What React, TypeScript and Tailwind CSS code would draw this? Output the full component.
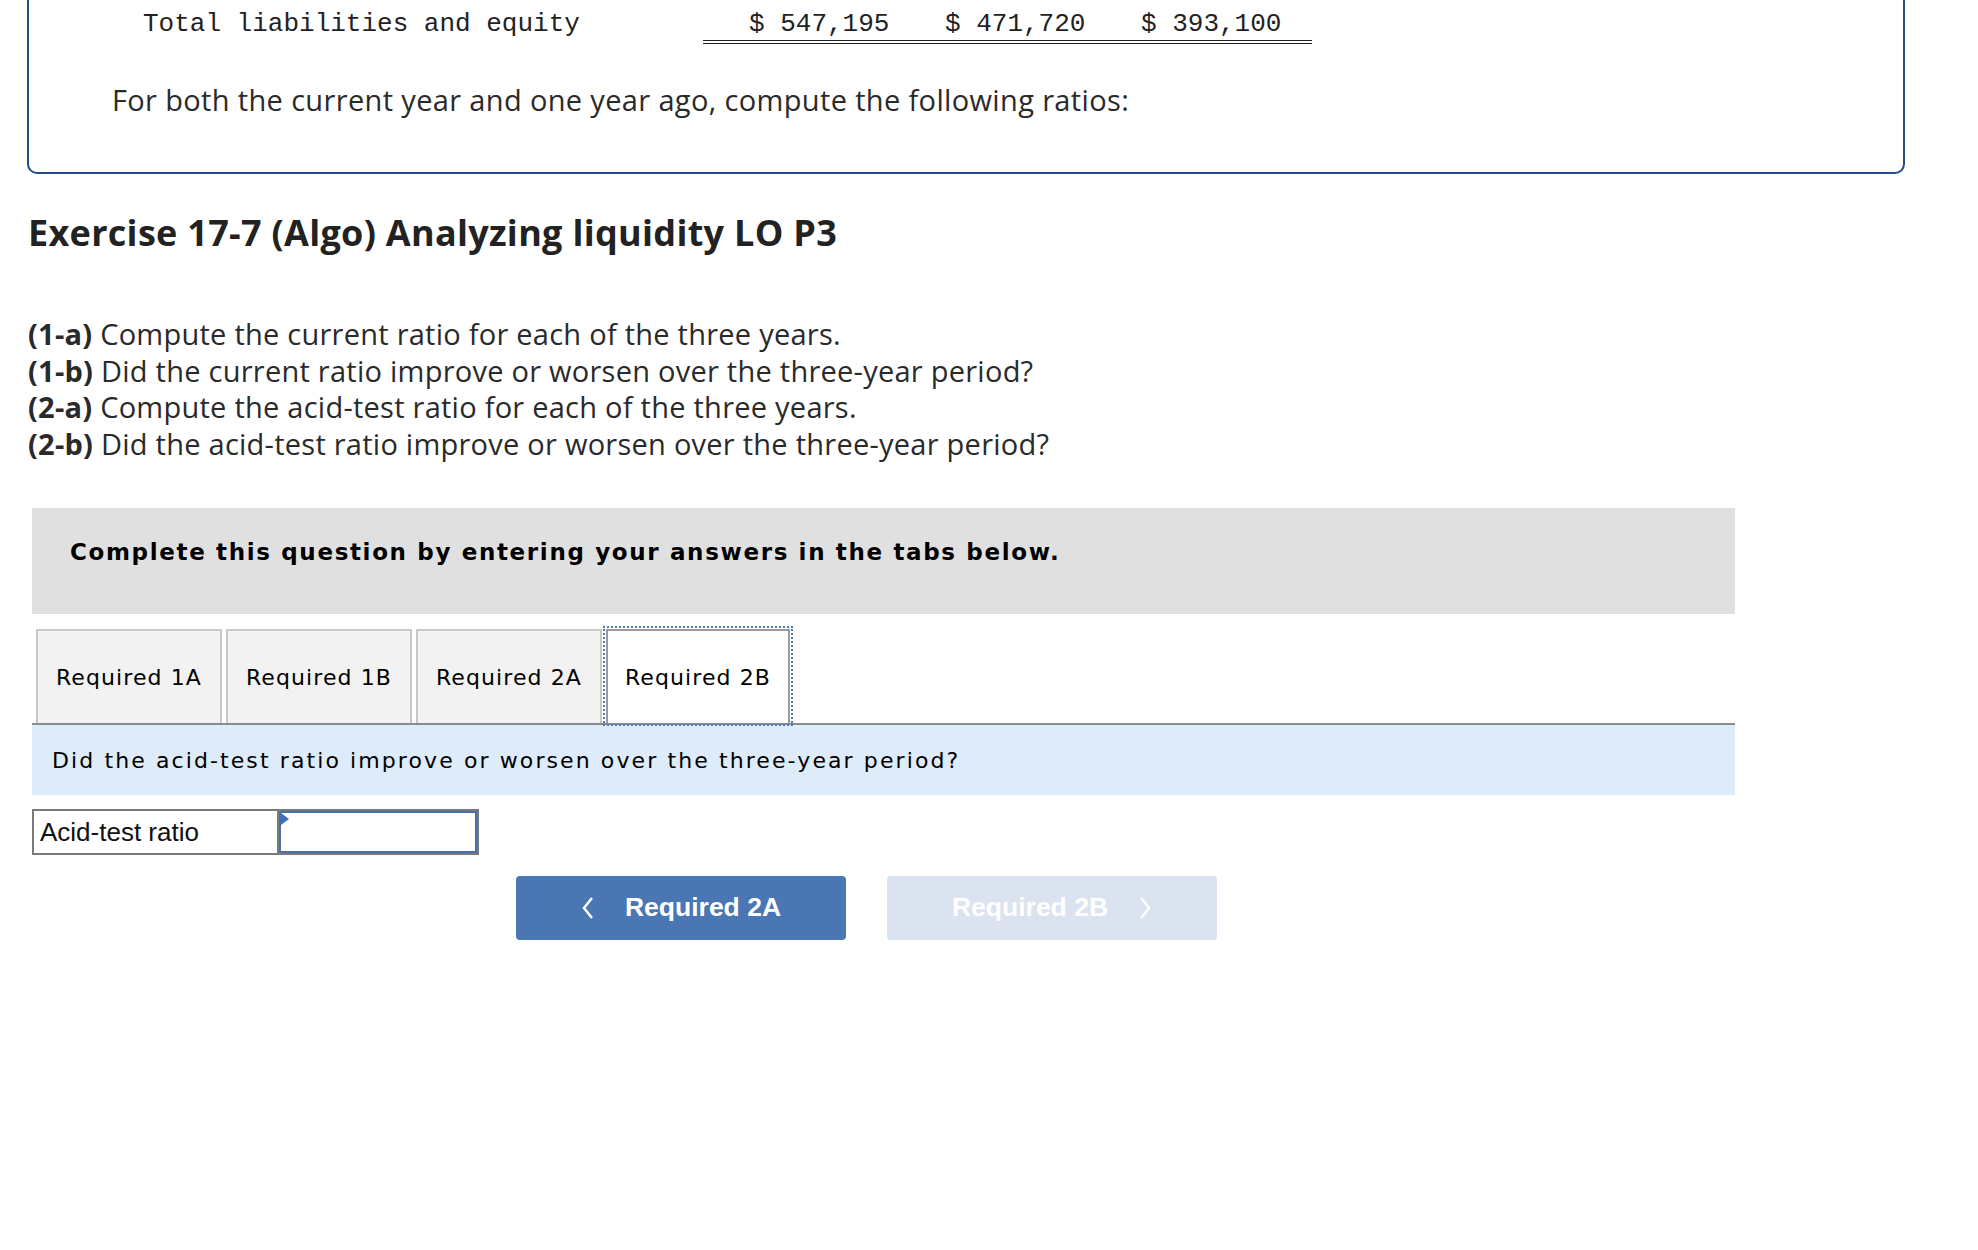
import React from "react";

const tabs = ["Required 1A", "Required 1B", "Required 2A", "Required 2B"];
const active = 3;

const parts = [
  ["(1-a)", "Compute the current ratio for each of the three years."],
  ["(1-b)", "Did the current ratio improve or worsen over the three-year period?"],
  ["(2-a)", "Compute the acid-test ratio for each of the three years."],
  ["(2-b)", "Did the acid-test ratio improve or worsen over the three-year period?"],
];

const App: React.FC = () => {
  return (
    <div className="min-h-screen bg-white pl-[27px] font-['Open_Sans',sans-serif] text-[#2a2a2a]">
      {/* balance sheet tail */}
      <div className="-mt-[20px] w-[1878px] rounded-[10px] border-2 border-[#234d86] pt-[26px] pb-[54px]">
        <div className="flex font-['Liberation_Mono',monospace] text-[26px] leading-[32px] text-[#222]">
          <div className="w-[674px] pl-[114px]">Total liabilities and equity</div>
          <div className="flex border-b-4 border-double border-[#222]">
            <div className="w-[196px] pl-[46px]">$ 547,195</div>
            <div className="w-[196px] pl-[46px]">$ 471,720</div>
            <div className="w-[217px] pl-[46px]">$ 393,100</div>
          </div>
        </div>
        <p className="mt-[38px] pl-[83px] text-[29px] leading-[36px] tracking-[0.35px]">
          For both the current year and one year ago, compute the following ratios:
        </p>
      </div>

      <h1 className="mt-[37px] pl-[1px] text-[36px] font-bold leading-[44px] tracking-[0.3px] text-[#222]">
        Exercise 17-7 (Algo) Analyzing liquidity LO P3
      </h1>

      <div className="mt-[61px] pl-[1px] text-[29px] leading-[36.5px] tracking-[0.25px]">
        {parts.map(([k, t]) => (
          <p key={k}>
            <span className="font-bold">{k}</span> {t}
          </p>
        ))}
      </div>

      <div className="ml-[5px] w-[1703px]">
        <div className="mt-[46px] h-[106px] bg-[#e0e0e0] pt-[31px] pl-[38px] font-['DejaVu_Sans',sans-serif] text-[23px] font-bold leading-[26px] tracking-[1.65px] text-black">
          Complete this question by entering your answers in the tabs below.
        </div>

        <div className="mt-[15px] flex gap-[4px] border-b-2 border-[#8c8c8c] pl-[4px] font-['DejaVu_Sans',sans-serif] text-[22px] tracking-[1.1px] text-black">
          {tabs.map((t, i) =>
            i === active ? (
              <div
                key={t}
                className="flex h-[94px] w-[184px] items-center justify-center border-2 border-b-0 border-[#9a9a9a] bg-white outline-2 outline-offset-1 outline-dotted outline-[#4a7bc4]"
              >
                {t}
              </div>
            ) : (
              <div
                key={t}
                className="flex h-[94px] w-[186px] items-center justify-center border-2 border-b-0 border-[#c8c8c8] bg-[#f2f2f2]"
              >
                {t}
              </div>
            )
          )}
        </div>

        <div className="flex h-[70px] items-center bg-[#deebf8] pl-[20px] font-['DejaVu_Sans',sans-serif] text-[22px] tracking-[2.1px] text-black">
          Did the acid-test ratio improve or worsen over the three-year period?
        </div>

        <div className="mt-[14px] flex h-[46px] w-[447px] border-2 border-[#7a7a7a] font-['Liberation_Sans',sans-serif] text-[26px] text-[#111]">
          <div className="flex w-[245px] items-center border-r-2 border-[#7a7a7a] pl-[6px]">Acid-test ratio</div>
          <div className="relative flex-1 border-2 border-[#4a6fae] bg-white">
            <span className="absolute top-0 left-0 h-0 w-0 border-t-[6px] border-b-[6px] border-l-[8px] border-t-transparent border-b-transparent border-l-[#3f6fc0]" />
          </div>
        </div>

        <div className="mt-[21px] ml-[484px] flex gap-[41px] font-['Liberation_Sans',sans-serif] text-[26.5px] font-bold text-white">
          <button className="flex h-[64px] w-[330px] items-center justify-center gap-[30px] rounded-[4px] bg-[#4a76b3]">
            <svg width="14" height="24" viewBox="0 0 14 24" fill="none" stroke="white" strokeWidth="2.5">
              <polyline points="11,2 3,12 11,22" />
            </svg>
            <span>Required 2A</span>
          </button>
          <button className="flex h-[64px] w-[330px] items-center justify-center gap-[30px] rounded-[4px] bg-[#dae3ef]">
            <span>Required 2B</span>
            <svg width="14" height="24" viewBox="0 0 14 24" fill="none" stroke="white" strokeWidth="2.5">
              <polyline points="3,2 11,12 3,22" />
            </svg>
          </button>
        </div>
      </div>
    </div>
  );
};

export default App;
